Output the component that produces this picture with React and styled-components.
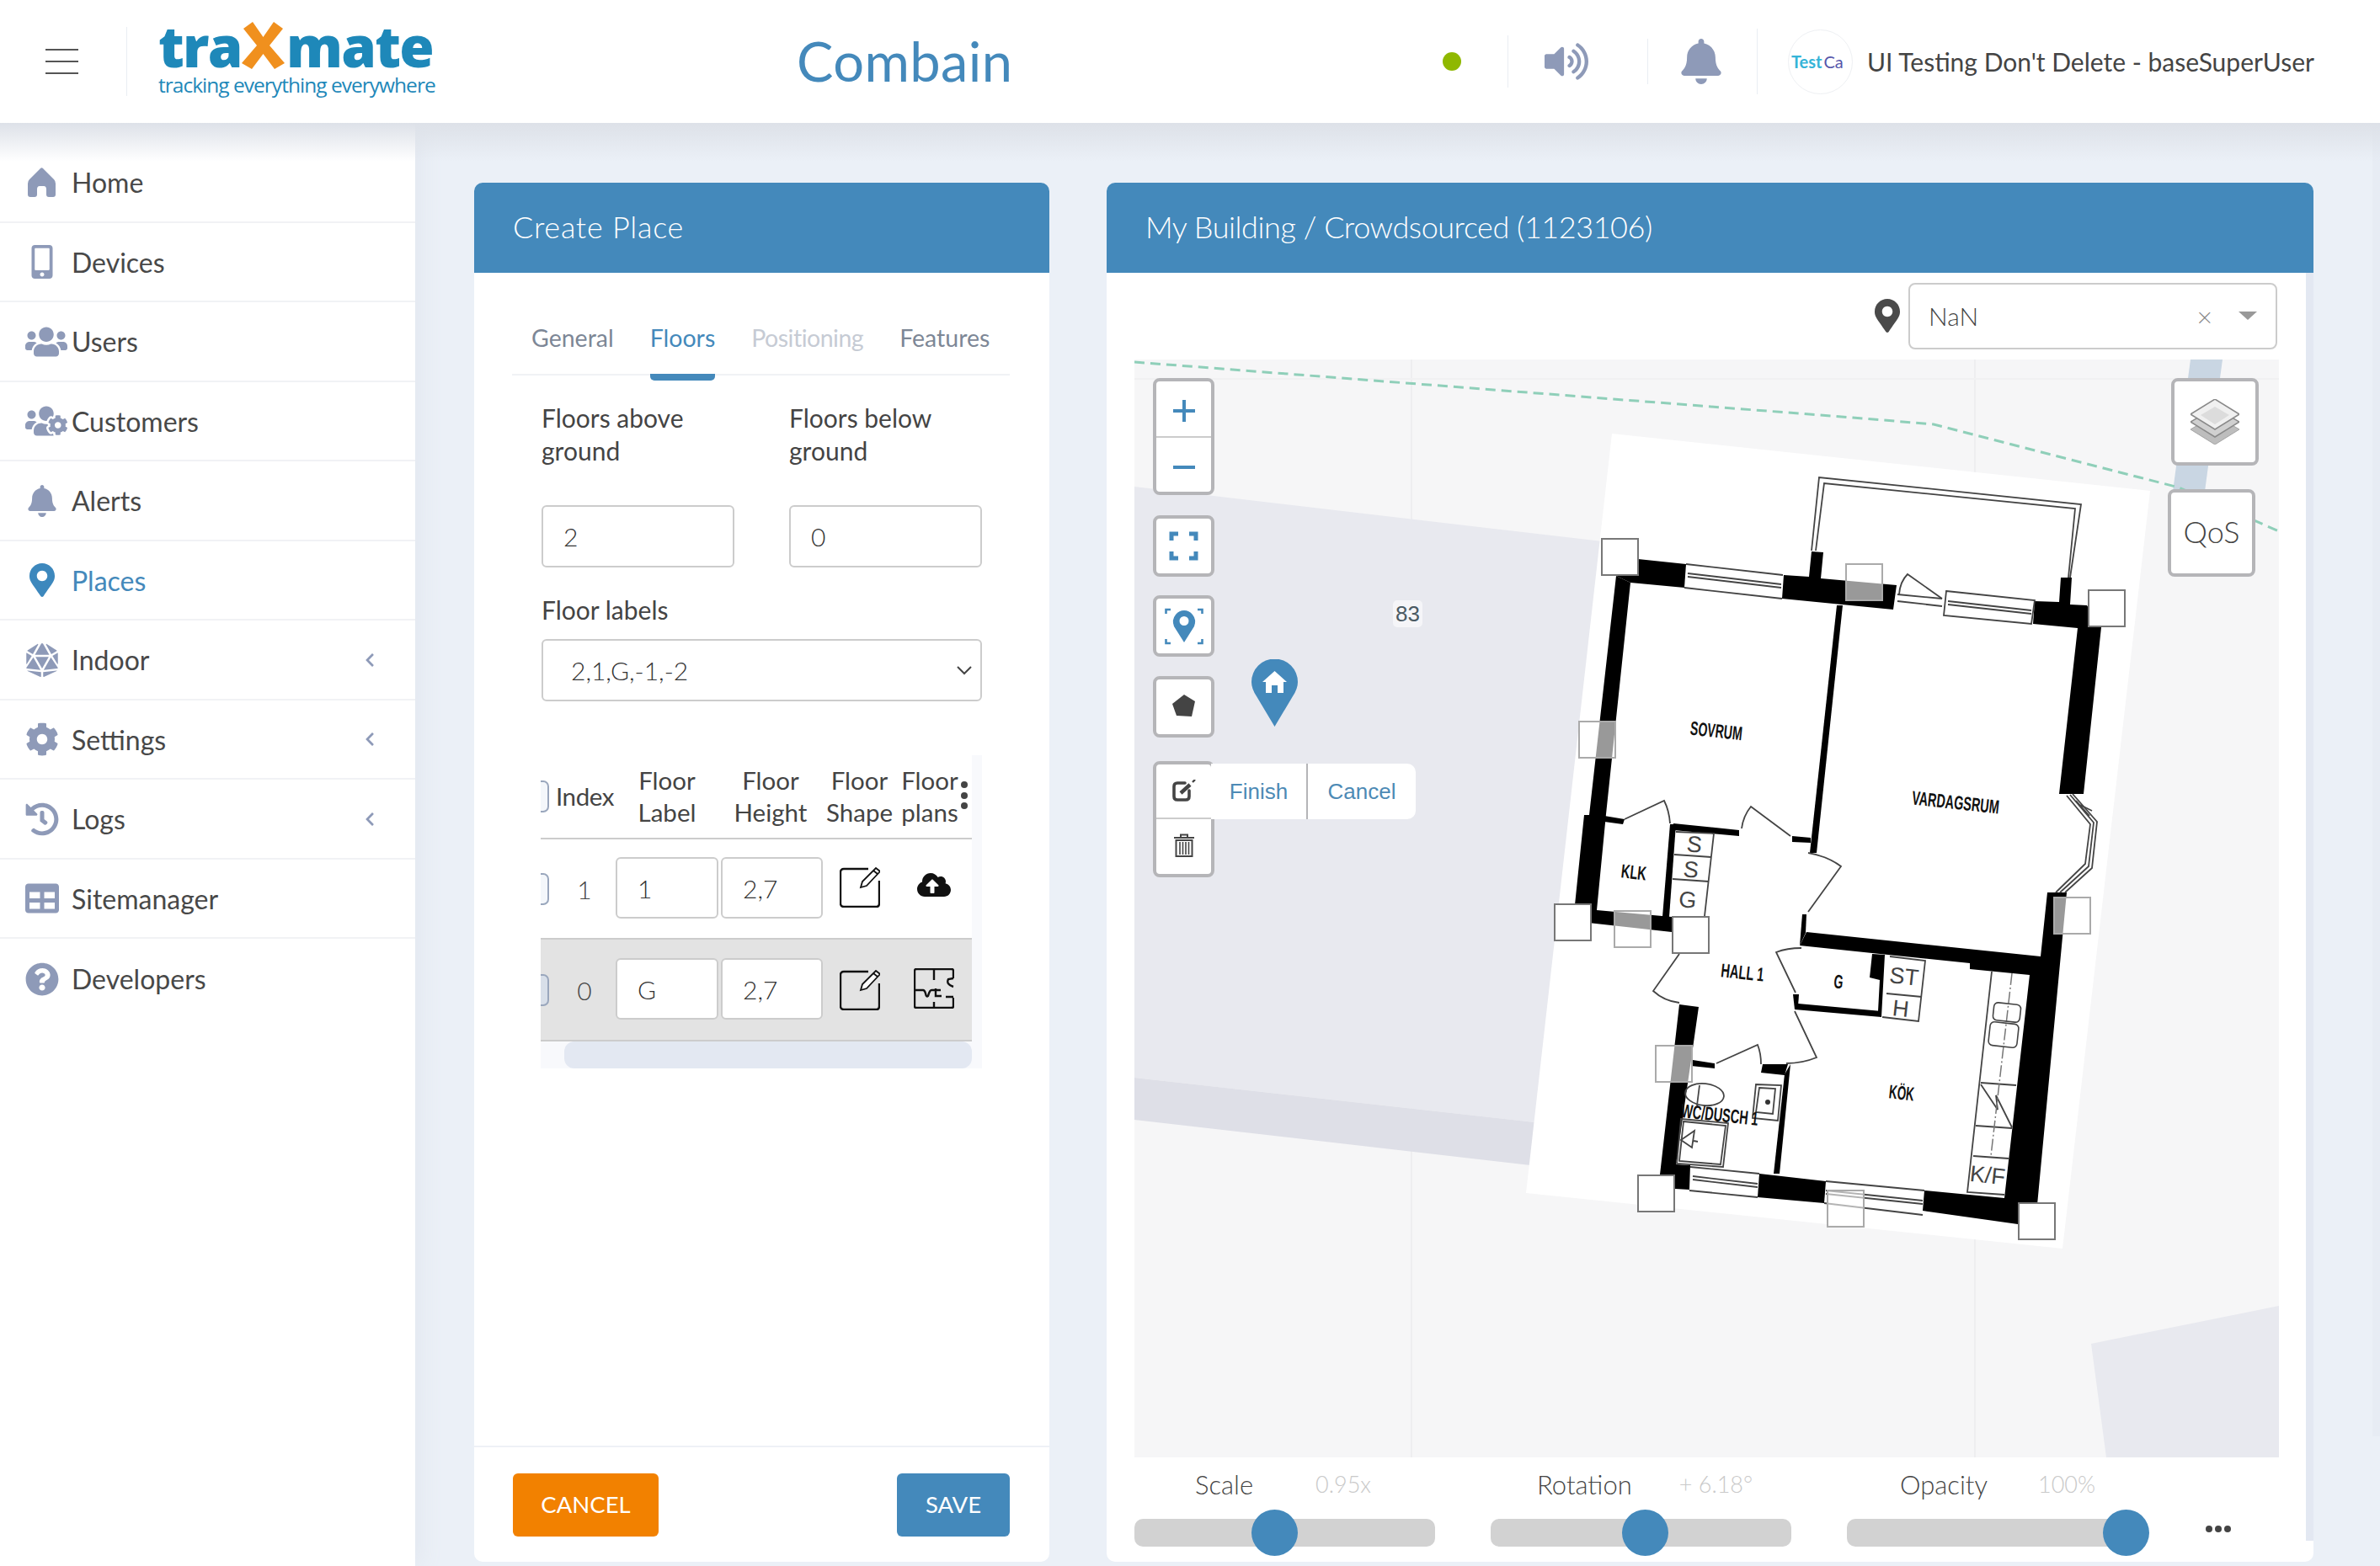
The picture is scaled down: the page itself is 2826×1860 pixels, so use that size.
import React from "react";
import styled, { createGlobalStyle } from "styled-components";
import {
  FaMobileAlt,
  FaUsers,
  FaUsersCog,
  FaBell,
  FaMapMarkerAlt,
  FaDiceD20,
  FaCog,
  FaHistory,
  FaTable,
  FaQuestionCircle,
  FaVolumeUp,
  FaCloudUploadAlt,
  FaChevronLeft,
} from "react-icons/fa";

const BLUE = "#4489bb";
const FONT = `Lato, "Noto Sans", sans-serif`;

const Global = createGlobalStyle`
  html, body { margin: 0; padding: 0; width: 2826px; height: 1860px; overflow: hidden; }
  body { font-family: ${FONT}; color: #444; background: #ebf0f7; }
  * { box-sizing: border-box; }
`;

const Page = styled.div`
  width: 2826px;
  height: 1860px;
  display: flex;
  flex-direction: column;
  overflow: hidden;
`;

const Header = styled.header`
  height: 146px;
  flex: none;
  background: #fff;
  display: flex;
  align-items: center;
  position: relative;
  z-index: 2;
`;
const Burger = styled.div`
  width: 39px;
  margin-left: 54px;
  display: flex;
  flex-direction: column;
  gap: 12px;
  span {
    display: block;
    height: 2px;
    background: #555;
  }
`;
const VLine = styled.div`
  width: 1px;
  height: ${(p) => p.$h}px;
  margin-left: ${(p) => p.$l || 0}px;
  background: #e9edf3;
  flex: none;
`;
const Logo = styled.div`
  margin-left: 37px;
  width: 330px;
  display: flex;
  flex-direction: column;
  color: #1e88b9;
  margin-top: 2px;
`;
const LogoWord = styled.div`
  font: 800 67px/52px "Open Sans", sans-serif;
  letter-spacing: -1.7px;
  height: 54px;
  margin: -5px 0 5px;
  white-space: nowrap;
  display: flex;
  align-items: center;
`;
const LogoX = styled.svg`
  flex: none;
  margin: 0 1px 0 -1px;
`;
const LogoTag = styled.div`
  font: 400 24.5px/30px "Open Sans", sans-serif;
  letter-spacing: -0.98px;
  white-space: nowrap;
`;
const Brand = styled.div`
  margin-left: 428px;
  width: 256px;
  font-size: 65px;
  font-weight: 400;
  color: ${BLUE};
  letter-spacing: 0.4px;
  padding-bottom: 3px;
`;
const Dot = styled.div`
  width: 22px;
  height: 22px;
  border-radius: 50%;
  background: #8fb800;
  margin-left: 511px;
  flex: none;
`;
const UserName = styled.div`
  margin-left: 17px;
  font-size: 30px;
  white-space: nowrap;
  color: #444;
`;
const HeadIcon = styled.div`
  color: #8e9ab8;
  display: flex;
  flex: none;
  margin-left: ${(p) => p.$l}px;
  margin-right: ${(p) => p.$r}px;
`;
const Avatar = styled.div`
  width: 77px;
  height: 77px;
  margin-left: 36px;
  flex: none;
  border-radius: 50%;
  border: 1px solid #eef0f3;
  overflow: hidden;
  display: flex;
  align-items: center;
  gap: 2px;
  padding-left: 3px;
  font-size: 20px;
  font-weight: 700;
  color: #35b4d8;
  white-space: nowrap;
  i {
    font-style: normal;
    font-weight: 400;
    color: #55a;
  }
`;

const Body = styled.div`
  flex: 1;
  display: flex;
  min-height: 0;
  position: relative;
  &::after {
    content: "";
    position: absolute;
    top: 0;
    left: 0;
    right: 0;
    height: 46px;
    pointer-events: none;
    background: linear-gradient(#dde1e8, rgba(235, 240, 247, 0));
  }
`;
const Sidebar = styled.nav`
  width: 493px;
  flex: none;
  background: #fff;
  padding-top: 24px;
  box-shadow: 10px 0 22px #e4e9f1;
`;
const NavRow = styled.div`
  height: 94.5px;
  display: flex;
  align-items: center;
  padding-top: 1px;
  border-bottom: ${(p) => (p.$last ? "none" : "2px solid #f1f2f5")};
  color: ${(p) => (p.$active ? BLUE : "#484848")};
  font-size: 32px;
  font-weight: 400;
`;
const NavIcon = styled.div`
  width: 85px;
  flex: none;
  display: flex;
  align-items: center;
  justify-content: center;
  padding-left: ${(p) => p.$pad}px;
  color: ${(p) => (p.$active ? "#3d88bd" : "#8e9ab8")};
`;
const NavLabel = styled.span`
  flex: 1;
`;
const Chevron = styled.div`
  color: #8e9ab8;
  margin-right: 45px;
  display: flex;
`;

const Main = styled.main`
  flex: 1;
  display: flex;
  gap: 68px;
  padding: 71px 0 5px 70px;
  min-width: 0;
  position: relative;
`;
const PageBar = styled.div`
  position: absolute;
  right: 0;
  top: 0;
  width: 9px;
  height: 1560px;
  background: #e7ecf4;
`;
const Card = styled.section`
  width: ${(p) => p.$w}px;
  flex: none;
  background: #fff;
  border-radius: 10px;
  display: flex;
  flex-direction: column;
  position: relative;
  overflow: hidden;
`;
const CardHead = styled.div`
  height: 107px;
  flex: none;
  background: ${BLUE};
  color: #fff;
  font-size: 36px;
  font-weight: 300;
  letter-spacing: ${(p) => p.$ls}px;
  display: flex;
  align-items: center;
  padding: 0 0 3px 46px;
`;

const PlaceBody = styled.div`
  flex: 1;
  padding: 0 47px 0 45px;
`;
const Tabs = styled.div`
  height: 122px;
  display: flex;
  gap: 43px;
  padding: 0 0 0 23px;
  border-bottom: 2px solid #f0f2f5;
  align-items: flex-start;
  font-size: 28.5px;
`;
const Tab = styled.div`
  height: 128px;
  padding-top: 59px;
  line-height: 36px;
  letter-spacing: ${(p) => (p.$off ? "-0.5px" : "0")};
  color: ${(p) => (p.$on ? BLUE : p.$off ? "#c6cbd4" : "#7d8796")};
  border-bottom: ${(p) => (p.$on ? `8px solid ${BLUE}` : "none")};
  border-radius: ${(p) => (p.$on ? "0 0 5px 5px" : "0")};
`;
const FormGrid = styled.div`
  display: grid;
  grid-template-columns: 229px 229px;
  column-gap: 65px;
  padding: 31px 0 0 35px;
`;
const Label = styled.div`
  font-size: 30px;
  line-height: 39px;
  color: #444;
  height: ${(p) => p.$h || 39}px;
`;
const TextBox = styled.div`
  height: 74px;
  border: 2px solid #ccc;
  border-radius: 6px;
  padding-left: 24px;
  display: flex;
  align-items: center;
  font-size: 30px;
  font-weight: 300;
  color: #333;
  background: #fff;
`;
const FullRow = styled.div`
  grid-column: 1 / 3;
`;
const FloorLabels = styled(Label)`
  margin-top: 31px;
  margin-bottom: 15px;
`;
const Select = styled(TextBox)`
  padding-left: 33px;
  justify-content: space-between;
  padding-right: 10px;
`;

const TableWrap = styled.div`
  margin: 64px 0 0 34px;
  width: 524px;
  position: relative;
  overflow: hidden;
  background: #f8f9fc;
`;
const Row = styled.div`
  display: grid;
  width: 512px;
  grid-template-columns: 16px 73px 122px 124px 87px 90px;
  align-items: center;
  background: ${(p) => (p.$grey ? "#e3e3e3" : "#fff")};
  height: ${(p) => p.$h}px;
  border-bottom: 2px solid #ccc;
`;
const HeadCell = styled.div`
  font-size: 29.5px;
  line-height: 38px;
  text-align: center;
  color: #444;
  white-space: nowrap;
  letter-spacing: ${(p) => p.$ls || 0}px;
  margin: ${(p) => p.$m || "0"};
`;
const Check = styled.div`
  width: 10px;
  height: 38px;
  border: 2px solid #9aa7bd;
  border-left: none;
  border-radius: 0 7px 7px 0;
  background: ${(p) => (p.$grey ? "#d8dfe9" : "#f4f7fb")};
`;
const IndexCell = styled.div`
  font-size: 30px;
  font-weight: 300;
  text-align: center;
  padding-left: 1px;
  padding-right: 2px;
  color: #444;
`;
const CellBox = styled(TextBox)`
  height: 73px;
  width: ${(p) => p.$w}px;
  margin-left: ${(p) => p.$l || 0}px;
  padding-left: 24px;
  margin-top: -2px;
`;
const IconCell = styled.div`
  display: flex;
  justify-content: center;
  color: #111;
  margin: ${(p) => p.$m || "0"};
`;
const ScrollThumbX = styled.div`
  height: 32px;
  margin-left: 28px;
  width: 484px;
  border-radius: 12px;
  background: #e3e8f2;
`;
const Dots = styled.div`
  position: absolute;
  left: 499px;
  top: 31px;
  display: flex;
  flex-direction: column;
  gap: 4.5px;
  span {
    width: 8px;
    height: 8px;
    border-radius: 50%;
    background: #444;
  }
`;

const CardFoot = styled.div`
  height: 138px;
  flex: none;
  border-top: 2px solid #eef1f6;
  display: flex;
  justify-content: space-between;
  align-items: flex-start;
  padding: 31px 47px 0 46px;
`;
const Btn = styled.div`
  width: ${(p) => p.$w}px;
  height: 75px;
  background: ${(p) => p.$bg};
  color: #fff;
  font-size: 27.5px;
  border-radius: 6px;
  display: flex;
  align-items: center;
  justify-content: center;
  padding-bottom: 2px;
`;

const MapBody = styled.div`
  flex: 1;
  display: flex;
  flex-direction: column;
  padding: 11px 33px 0 33px;
  position: relative;
`;
const CardBar = styled.div`
  position: absolute;
  right: 0;
  top: 0;
  width: 9px;
  height: 1506px;
  background: #e3e8f2;
`;
const PlaceRow = styled.div`
  display: flex;
  justify-content: flex-end;
  align-items: center;
  gap: 5px;
  height: 80px;
  flex: none;
  color: #4a4a4a;
  padding-right: 10px;
`;
const PlaceSelect = styled.div`
  width: 438px;
  height: 79px;
  border: 2px solid #ccc;
  border-radius: 8px;
  display: flex;
  align-items: center;
  padding: 0 22px;
  font-size: 30px;
  font-weight: 300;
  color: #444;
`;
const Grow = styled.span`
  flex: 1;
`;
const ClearX = styled.span`
  font-size: 32px;
  color: #888;
  margin-right: 31px;
`;
const Caret = styled.span`
  width: 0;
  height: 0;
  border-left: 11px solid transparent;
  border-right: 11px solid transparent;
  border-top: 10px solid #999;
`;
const MapArea = styled.div`
  margin-top: 12px;
  width: 1359px;
  height: 1304px;
  flex: none;
  position: relative;
  overflow: hidden;
  background: #f6f6f7;
`;
const MapSvg = styled.svg`
  position: absolute;
  inset: 0;
  width: 100%;
  height: 100%;
`;
const Ctl = styled.div`
  position: absolute;
  left: ${(p) => p.$x}px;
  top: ${(p) => p.$y}px;
  width: ${(p) => p.$w || 73}px;
  height: ${(p) => p.$h || 73}px;
  background: #fff;
  border: 4px solid #b5b5b8;
  border-radius: 8px;
  display: flex;
  flex-direction: column;
  overflow: hidden;
`;
const CtlPart = styled.div`
  flex: 1;
  display: flex;
  align-items: center;
  justify-content: center;
  color: ${(p) => p.$c || BLUE};
  border-bottom: ${(p) => (p.$line ? "2px solid #ccc" : "none")};
  padding-top: ${(p) => p.$pt || 0}px;
  padding-bottom: ${(p) => p.$pb || 0}px;
  font-size: 36px;
  font-weight: 300;
`;
const DrawBar = styled.div`
  position: absolute;
  left: 91px;
  top: 480px;
  height: 66px;
  display: flex;
  background: #fff;
  border-radius: 0 10px 10px 0;
  font: 400 26px "Liberation Sans", sans-serif;
  color: #4d8ab5;
`;
const DrawBtn = styled.div`
  display: flex;
  align-items: center;
  justify-content: center;
  width: ${(p) => p.$w}px;
  border-right: ${(p) => (p.$line ? "2px solid #b5b5b8" : "none")};
`;
const MapLabel = styled.div`
  position: absolute;
  left: 307px;
  top: 286px;
  padding: 0 3px;
  background: rgba(255, 255, 255, 0.55);
  border-radius: 5px;
  font: 400 26px/32px "Liberation Sans", sans-serif;
  color: #4a5a63;
`;
const Pin = styled.svg`
  position: absolute;
  left: 139px;
  top: 356px;
`;

const SliderBar = styled.div`
  flex: 1;
  display: grid;
  grid-template-columns: 357px 357px 357px auto;
  column-gap: 66px;
  position: relative;
`;
const SliderCol = styled.div`
  display: flex;
  flex-direction: column;
`;
const SliderHead = styled.div`
  height: 73px;
  display: flex;
  align-items: center;
  padding-bottom: 10px;
  padding-left: ${(p) => p.$l}px;
  gap: ${(p) => p.$g}px;
  font-size: 31px;
  font-weight: 300;
  white-space: nowrap;
`;
const SliderVal = styled.span`
  color: #c9c9c9;
  font-size: 27px;
`;
const Track = styled.div`
  height: 33px;
  background: #d2d2d2;
  border-radius: 10px;
  position: relative;
`;
const Thumb = styled.div`
  position: absolute;
  top: -11px;
  width: 55px;
  height: 55px;
  border-radius: 50%;
  background: ${BLUE};
`;
const More = styled.div`
  display: flex;
  gap: 3px;
  padding: 81px 0 0 3px;
  span {
    width: 8px;
    height: 8px;
    border-radius: 50%;
    background: #444;
  }
`;

const HomeIcon = () => (
  <svg width="33" height="35" viewBox="0 0 33 35">
    <path
      fill="currentColor"
      d="M15 1 Q16.5 -0.4 18 1 L31 14 Q33 16 33 19 V32 Q33 35 30 35 H25 Q22 35 22 32 V26 Q22 22 19 22 H14 Q11 22 11 26 V32 Q11 35 8 35 H3 Q0 35 0 32 V19 Q0 16 2 14 Z"
    />
  </svg>
);

const EditBox = () => (
  <svg width="48" height="48" viewBox="0 0 48 48" fill="none" stroke="#111">
    <path strokeWidth="2.4" d="M34 2 H5 Q1 2 1 6 V43 Q1 47 5 47 H44 Q47 47 47 43 V16" />
    <path
      strokeWidth="1.8"
      fill="#fff"
      d="M43 1 L48 5 L32 22 L25 24 L27 17 Z"
    />
    <path strokeWidth="1.8" d="M40 4 L45 8" />
  </svg>
);

const PlanIcon = () => (
  <svg width="48" height="48" viewBox="0 0 48 48" fill="none" stroke="#111" strokeWidth="2.4">
    <path d="M47 12 V3 Q47 1 45 1 H3 Q1 1 1 3 V45 Q1 47 3 47 H45 Q47 47 47 45 V35" />
    <path d="M24 1 V14 M1 26 H11 Q13 26 14 30 Q15 35 17 33 Q19 25 22 26 H32 M26 24 V33 H33 M24 40 V47 M38 34 H47 M47 22 Q38 19 41 13 L47 12" />
  </svg>
);

const LayersIcon = () => (
  <svg width="58" height="54" viewBox="0 0 58 54">
    <path fill="#bdbdbd" stroke="#a5a5a5" strokeWidth="1" d="M0 36 L29 19 L58 36 L29 54 Z" />
    <path fill="#d0d0d0" stroke="#8a8a8a" strokeWidth="1.5" d="M0 27 L29 10 L58 27 L29 45 Z" />
    <path fill="#f0f0f0" stroke="#8a8a8a" strokeWidth="1.5" d="M0 18 L29 0 L58 18 L29 36 Z" />
    <path fill="#dcdcdc" d="M12 19 L29 9 L46 19 L29 30 Z" />
  </svg>
);

const FitIcon = () => (
  <svg width="35" height="35" viewBox="0 0 35 35" fill="none" stroke={BLUE} strokeWidth="5">
    <path d="M11 3 H3 V11 M24 3 H32 V11 M3 24 V32 H11 M32 24 V32 H24" />
  </svg>
);

const LocateIcon = () => (
  <svg width="46" height="44" viewBox="0 0 46 44">
    <path fill="none" stroke={BLUE} strokeWidth="2.6" d="M7 2 H1.5 V7 M39 2 H44.5 V7 M1.5 37 V42 H7 M44.5 37 V42 H39" />
    <path
      fill={BLUE}
      fillRule="evenodd"
      d="M23 41 L11 22 Q8 14 13 8 Q17 3 23 3 Q29 3 33 8 Q38 14 35 22 Z M23 10 A5.5 5.5 0 1 0 23 21 A5.5 5.5 0 1 0 23 10 Z"
    />
  </svg>
);

const DrawEditIcon = () => (
  <svg width="28" height="26" viewBox="0 0 28 26" fill="none" stroke="#444">
    <path strokeWidth="3.6" strokeLinecap="round" d="M15 4 H6 Q2 4 2 8 V20 Q2 24 6 24 H16 Q20 24 20 20 V13" />
    <path strokeWidth="4.4" d="M10 16 L21 6" />
    <path strokeWidth="2.4" d="M24 3 L27 0" />
  </svg>
);

const TrashIcon = () => (
  <svg width="24" height="28" viewBox="0 0 24 28" fill="none" stroke="#444" strokeWidth="1.6">
    <path d="M0 5 H24 M8 5 V1.5 H16 V5" strokeWidth="2" />
    <path d="M2.5 8 H21.5 V27 H2.5 Z" strokeWidth="2" />
    <path d="M7 10 V25 M10.5 10 V25 M14 10 V25 M17.5 10 V25" />
  </svg>
);

// everything in the plan is given in page coordinates, the viewBox moves it under the map
const BLACK = [
  "1945,663 2002,669 2000,697 1936,691 1919,683",
  "1919,683 1936,691 1907,966 1896,1080 1985,1088 1985,1106 1868,1093 1881,967 1887,967",
  "2118,682 2148,684 2151,654 2165,655 2162,686 2252,694 2248,723 2116,710",
  "2416,713 2445,714 2447,685 2460,685 2458,717 2478,718 2495,744 2474,942 2445,942 2467,745 2414,740",
  "2181,718 2188,718 2157,1012 2149,1012",
  "2128,992 2150,994 2150,1000 2128,999",
  "1987,977 2065,985 2065,992 1987,985",
  "1983,978 1990,978 1982,1088 1974,1088",
  "1905,968 1929,972 1927,978 1905,975",
  "2431,1059 2454,1059 2419,1430 2396,1453 2283,1437 2285,1413 2380,1422 2410,1157 2339,1150 2339,1143 2242,1133 2137,1122 2145,1106 2423,1135",
  "2223,1132 2238,1133 2234,1207 2230,1200 2232,1163 2220,1160",
  "2135,1191 2234,1200 2234,1207 2131,1198",
  "2129,1180 2136,1180 2135,1195 2131,1198",
  "2140,1085 2145,1085 2144,1107 2137,1122",
  "1994,1192 2017,1195 2008,1258 1990,1382 2007,1383 2006,1412 1989,1411 1971,1394",
  "2010,1258 2036,1262 2036,1268 2008,1265",
  "2093,1263 2123,1263 2119,1276 2091,1273",
  "2119,1275 2126,1263 2113,1393 2106,1393",
  "2089,1393 2168,1402 2166,1428 2087,1421",
];

const THIN = [
  "M2151 653 L2160 566 L2471 598 L2458 685",
  "M2156 653 L2166 573 L2464 603 L2456 685",
  "M2002 669 L2117 682 M2000 697 L2116 710",
  "M2004 680 L2115 693 M2004 684 L2115 697",
  "M2255 705 Q2256 690 2265 681 L2306 710",
  "M2253 705 L2306 710 M2253 713 L2306 719",
  "M2311 701 L2416 712 L2412 740 L2308 730 Z",
  "M2313 713 L2412 724 M2313 717 L2412 728",
  "M2126 992 L2079 957 Q2070 968 2068 983",
  "M1929 972 L1976 950 Q1982 962 1983 977",
  "M1990 987 L2035 989 L2024 1087",
  "M1988 1014 L2032 1017 M1986 1043 L2029 1046",
  "M2454 944 L2482 978 L2476 1025 L2441 1059",
  "M2461 942 L2490 975 L2484 1030 L2452 1059",
  "M2458 943 L2486 976 L2480 1028 L2446 1059",
  "M2465 950 L2481 968 M2470 955 L2484 962",
  "M2147 1012 Q2170 1016 2186 1028 L2147 1082",
  "M2139 1125 Q2122 1125 2109 1130 L2132 1178",
  "M1994 1132 L1963 1176 Q1976 1188 1994 1190",
  "M2131 1200 L2157 1255 Q2140 1262 2121 1262",
  "M2038 1262 L2087 1240 Q2091 1250 2091 1263",
  "M2007 1385 L2089 1393 M2006 1413 L2087 1421",
  "M2010 1396 L2087 1405 M2010 1400 L2087 1409",
  "M2168 1402 L2285 1413 M2166 1428 L2283 1442",
  "M2168 1413 L2283 1425 M2168 1417 L2283 1429",
  "M2244 1135 L2286 1140 L2278 1212 L2235 1207",
  "M2240 1179 L2282 1183",
  "M2365 1153 L2336 1415 L2380 1418",
  "M2352 1285 L2394 1288 M2346 1336 L2389 1339 M2343 1372 L2385 1375",
  "M2352 1287 L2372 1317 L2370 1300 L2389 1338",
  "M1996 1328 L2052 1333 L2046 1385 L1991 1381 Z",
  "M1999 1331 L2049 1336 L2043 1382 L1994 1378 Z",
  "M2085 1287 L2115 1288 L2111 1330 L2081 1327 Z",
  "M2089 1291 L2108 1292 L2105 1322 L2085 1320 Z",
  "M2018 1288 L2015 1312",
  "M2012 1342 L1996 1353 L2009 1362 Z M2011 1354 L2016 1355",
];

const ROOMS = [
  ["SOVRUM", 2038, 867, 23, 62],
  ["VARDAGSRUM", 2322, 952, 23, 104],
  ["KLK", 1940, 1035, 23, 30],
  ["HALL 1", 2069, 1154, 23, 51],
  ["G", 2183, 1165, 23, 11],
  ["KÖK", 2258, 1297, 23, 30],
  ["WC/DUSCH 1", 2042, 1323, 23, 92],
];
const FIXTURES = [
  ["S", 2012, 1002, 27],
  ["S", 2008, 1032, 27],
  ["G", 2004, 1068, 27],
  ["ST", 2261, 1159, 27],
  ["H", 2257, 1197, 27],
  ["K/F", 2360, 1395, 27],
];

const HANDLES = [
  [1902, 639],
  [2192, 669, true],
  [2480, 700],
  [1875, 856, true],
  [1846, 1073],
  [1917, 1081, true],
  [1986, 1088],
  [2439, 1065, true],
  [1966, 1241, true],
  [1945, 1395],
  [2170, 1413, true],
  [2397, 1428],
];

const rot = (x, y, a = 6.18) => `rotate(${a} ${x} ${y})`;

function MapDrawing() {
  return (
    <MapSvg viewBox="1347 426 1359 1304">
      <path d="M1676 426 V1730 M2345 426 V1730" stroke="#eeeef0" strokeWidth="2" />
      <path d="M1347 449 H2706" stroke="#f1f1f2" strokeWidth="2" />
      <polygon fill="#e8e9ef" points="1347,577 1920,644 1822,1332 1347,1279" />
      <polygon fill="#dedfe7" points="1347,1279 1822,1332 1817,1383 1347,1329" />
      <polygon fill="#e8e9ef" points="2483,1595 2706,1550 2706,1730 2501,1730" />
      <polygon fill="#c9d6e3" points="2601,426 2639,426 2617,590 2579,590" />
      <path
        d="M1347 429 L2200 495 L2296 503 L2587 578 L2706 630"
        fill="none"
        stroke="#8fcfb9"
        strokeWidth="3"
        strokeDasharray="12 7"
      />
      <polygon fill="#fff" points="1914,514 2553,582 2449,1482 1812,1416" />
      {BLACK.map((pts) => (
        <polygon key={pts} points={pts} fill="#000" />
      ))}
      {THIN.map((d) => (
        <path key={d} d={d} fill="none" stroke="#444" strokeWidth="1.8" />
      ))}
      <path d="M2389 1155 L2364 1372" stroke="#777" strokeWidth="1.5" strokeDasharray="14 3 2 3" />
      <rect x="2367" y="1191" width="32" height="21" rx="5" fill="none" stroke="#444" strokeWidth="1.6" transform={rot(2383, 1201)} />
      <rect x="2362" y="1214" width="34" height="28" rx="5" fill="none" stroke="#444" strokeWidth="1.6" transform={rot(2379, 1228)} />
      <ellipse cx="2024" cy="1299" rx="23" ry="13" fill="none" stroke="#444" strokeWidth="1.8" transform={rot(2024, 1299)} />
      <circle cx="2099" cy="1308" r="3" fill="#333" />
      {ROOMS.map(([t, x, y, s, w]) => (
        <text
          key={t}
          x={x}
          y={y + 8}
          textAnchor="middle"
          fontFamily="'Liberation Sans', sans-serif"
          fontWeight="700"
          fontSize={s}
          textLength={w}
          lengthAdjust="spacingAndGlyphs"
          transform={rot(x, y)}
          fill="#111"
        >
          {t}
        </text>
      ))}
      {FIXTURES.map(([t, x, y, s]) => (
        <text
          key={t + x}
          x={x}
          y={y + 9}
          textAnchor="middle"
          fontFamily="'Liberation Sans', sans-serif"
          fontSize={s}
          transform={rot(x, y)}
          fill="#444"
        >
          {t}
        </text>
      ))}
      {HANDLES.map(([x, y, faded]) => (
        <rect
          key={x}
          x={x}
          y={y}
          width="43"
          height="43"
          fill="#fff"
          fillOpacity={faded ? 0.6 : 1}
          stroke={faded ? "#aaa" : "#777"}
          strokeWidth="2"
        />
      ))}
    </MapSvg>
  );
}

const NAV = [
  { name: "Home", icon: <HomeIcon />, pad: 14 },
  { name: "Devices", icon: <FaMobileAlt size={40} />, pad: 14 },
  { name: "Users", icon: <FaUsers size={50} />, pad: 24 },
  { name: "Customers", icon: <FaUsersCog size={50} />, pad: 24 },
  { name: "Alerts", icon: <FaBell size={38} />, pad: 14 },
  { name: "Places", icon: <FaMapMarkerAlt size={40} />, pad: 14, active: true },
  { name: "Indoor", icon: <FaDiceD20 size={40} />, pad: 14, more: true },
  { name: "Settings", icon: <FaCog size={40} />, pad: 14, more: true },
  { name: "Logs", icon: <FaHistory size={40} />, pad: 14, more: true },
  { name: "Sitemanager", icon: <FaTable size={40} />, pad: 14 },
  { name: "Developers", icon: <FaQuestionCircle size={40} />, pad: 14 },
];

export default function App() {
  return (
    <Page>
      <Global />
      <Header>
        <Burger>
          <span />
          <span />
          <span />
        </Burger>
        <VLine $h={82} $l={57} />
        <Logo>
          <LogoWord>
            tra
            <LogoX width="53" height="56" viewBox="0 0 53 56" fill="#f0901e">
              <path d="M14 0 L26.5 18 L39 0 L50 8 L34 28 L52 49 L40 56 L26.5 38 L13 56 L1 49 L19 28 L3 8 Z" />
            </LogoX>
            mate
          </LogoWord>
          <LogoTag>tracking everything everywhere</LogoTag>
        </Logo>
        <Brand>Combain</Brand>
        <Dot />
        <VLine $h={62} $l={55} />
        <HeadIcon $l={43} $r={70}>
          <FaVolumeUp size={52} />
        </HeadIcon>
        <VLine $h={54} />
        <HeadIcon $l={36} $r={39}>
          <FaBell size={54} />
        </HeadIcon>
        <VLine $h={78} />
        <Avatar>
          <span>Test</span>
          <i>Ca</i>
        </Avatar>
        <UserName>UI Testing Don't Delete - baseSuperUser</UserName>
      </Header>
      <Body>
        <Sidebar>
          {NAV.map((item, i) => (
            <NavRow key={item.name} $active={item.active} $last={i === NAV.length - 1}>
              <NavIcon $active={item.active} $pad={item.pad}>
                {item.icon}
              </NavIcon>
              <NavLabel>{item.name}</NavLabel>
              {item.more && (
                <Chevron>
                  <FaChevronLeft size={18} />
                </Chevron>
              )}
            </NavRow>
          ))}
        </Sidebar>
        <Main>
          <PageBar />
          <Card $w={683}>
            <CardHead $ls={0.75}>Create Place</CardHead>
            <PlaceBody>
              <Tabs>
                <Tab>General</Tab>
                <Tab $on>Floors</Tab>
                <Tab $off>Positioning</Tab>
                <Tab>Features</Tab>
              </Tabs>
              <FormGrid>
                <Label $h={123}>
                  Floors above
                  <br />
                  ground
                </Label>
                <Label $h={123}>
                  Floors below
                  <br />
                  ground
                </Label>
                <TextBox>2</TextBox>
                <TextBox>0</TextBox>
                <FullRow>
                  <FloorLabels>Floor labels</FloorLabels>
                  <Select>
                    2,1,G,-1,-2
                    <svg width="18" height="12" viewBox="0 0 18 12" fill="none" stroke="#444" strokeWidth="2">
                      <path d="M1 2 L9 10 L17 2" />
                    </svg>
                  </Select>
                </FullRow>
              </FormGrid>
              <TableWrap>
                <Row $h={100}>
                  <Check />
                  <HeadCell $ls={-0.4}>Index</HeadCell>
                  <HeadCell>
                    Floor
                    <br />
                    Label
                  </HeadCell>
                  <HeadCell>
                    Floor
                    <br />
                    Height
                  </HeadCell>
                  <HeadCell>
                    Floor
                    <br />
                    Shape
                  </HeadCell>
                  <HeadCell $m="0 10px 0 0">
                    Floor
                    <br />
                    plans
                  </HeadCell>
                </Row>
                <Row $h={119}>
                  <Check />
                  <IndexCell>1</IndexCell>
                  <CellBox $w={122}>1</CellBox>
                  <CellBox $w={121} $l={3}>
                    2,7
                  </CellBox>
                  <IconCell $m="-4px 0 0 0">
                    <EditBox />
                  </IconCell>
                  <IconCell $m="-10px 0 0 0">
                    <FaCloudUploadAlt size={40} />
                  </IconCell>
                </Row>
                <Row $h={121} $grey>
                  <Check $grey />
                  <IndexCell>0</IndexCell>
                  <CellBox $w={122}>G</CellBox>
                  <CellBox $w={121} $l={3}>
                    2,7
                  </CellBox>
                  <IconCell>
                    <EditBox />
                  </IconCell>
                  <IconCell $m="-4px 0 0 0">
                    <PlanIcon />
                  </IconCell>
                </Row>
                <ScrollThumbX />
                <Dots>
                  <span />
                  <span />
                  <span />
                </Dots>
              </TableWrap>
            </PlaceBody>
            <CardFoot>
              <Btn $w={173} $bg="#f28100">
                CANCEL
              </Btn>
              <Btn $w={134} $bg={BLUE}>
                SAVE
              </Btn>
            </CardFoot>
          </Card>
          <Card $w={1433}>
            <CardHead $ls={-0.45}>My Building / Crowdsourced (1123106)</CardHead>
            <MapBody>
              <CardBar />
              <PlaceRow>
                <FaMapMarkerAlt size={40} />
                <PlaceSelect>
                  NaN
                  <Grow />
                  <ClearX>×</ClearX>
                  <Caret />
                </PlaceSelect>
              </PlaceRow>
              <MapArea>
                <MapDrawing />
                <Ctl $x={22} $y={22} $h={139}>
                  <CtlPart $line $pt={6}>
                    <svg width="26" height="26" viewBox="0 0 26 26" stroke={BLUE} strokeWidth="4">
                      <path d="M13 0 V26 M0 13 H26" />
                    </svg>
                  </CtlPart>
                  <CtlPart $pt={6}>
                    <svg width="26" height="4" viewBox="0 0 26 4" stroke={BLUE} strokeWidth="4">
                      <path d="M0 2 H26" />
                    </svg>
                  </CtlPart>
                </Ctl>
                <Ctl $x={22} $y={185}>
                  <CtlPart>
                    <FitIcon />
                  </CtlPart>
                </Ctl>
                <Ctl $x={22} $y={280}>
                  <CtlPart>
                    <LocateIcon />
                  </CtlPart>
                </Ctl>
                <Ctl $x={22} $y={376}>
                  <CtlPart $pb={4}>
                    <svg width="27" height="26" viewBox="0 0 27 26" fill="#444">
                      <path d="M14 0 L27 8 L23 26 L5 25 L0 11 Z" />
                    </svg>
                  </CtlPart>
                </Ctl>
                <Ctl $x={22} $y={477} $h={138}>
                  <CtlPart $line $c="#444" $pb={2}>
                    <DrawEditIcon />
                  </CtlPart>
                  <CtlPart $pb={4}>
                    <TrashIcon />
                  </CtlPart>
                </Ctl>
                <DrawBar>
                  <DrawBtn $w={115} $line>
                    Finish
                  </DrawBtn>
                  <DrawBtn $w={128}>Cancel</DrawBtn>
                </DrawBar>
                <MapLabel>83</MapLabel>
                <Pin width="55" height="80" viewBox="0 0 55 80">
                  <path
                    fill={BLUE}
                    d="M27.5 80 L6 44 Q0 35 0 27 A27.5 27.5 0 0 1 55 27 Q55 35 49 44 Z"
                  />
                  <path fill="#fff" d="M27.5 14 L42 27 H38 V40 H31 V31 H24 V40 H17 V27 H13 Z" />
                </Pin>
                <Ctl $x={1231} $y={22} $w={104} $h={104}>
                  <CtlPart>
                    <LayersIcon />
                  </CtlPart>
                </Ctl>
                <Ctl $x={1227} $y={154} $w={104} $h={104}>
                  <CtlPart $c="#444" $pb={4}>
                    QoS
                  </CtlPart>
                </Ctl>
              </MapArea>
              <SliderBar>
                <SliderCol>
                  <SliderHead $l={72} $g={74}>
                    Scale <SliderVal>0.95x</SliderVal>
                  </SliderHead>
                  <Track>
                    <Thumb style={{ left: 139 }} />
                  </Track>
                </SliderCol>
                <SliderCol>
                  <SliderHead $l={55} $g={56}>
                    Rotation <SliderVal>+ 6.18°</SliderVal>
                  </SliderHead>
                  <Track>
                    <Thumb style={{ left: 156 }} />
                  </Track>
                </SliderCol>
                <SliderCol>
                  <SliderHead $l={63} $g={60}>
                    Opacity <SliderVal>100%</SliderVal>
                  </SliderHead>
                  <Track>
                    <Thumb style={{ left: 304 }} />
                  </Track>
                </SliderCol>
                <More>
                  <span />
                  <span />
                  <span />
                </More>
              </SliderBar>
            </MapBody>
          </Card>
        </Main>
      </Body>
    </Page>
  );
}
